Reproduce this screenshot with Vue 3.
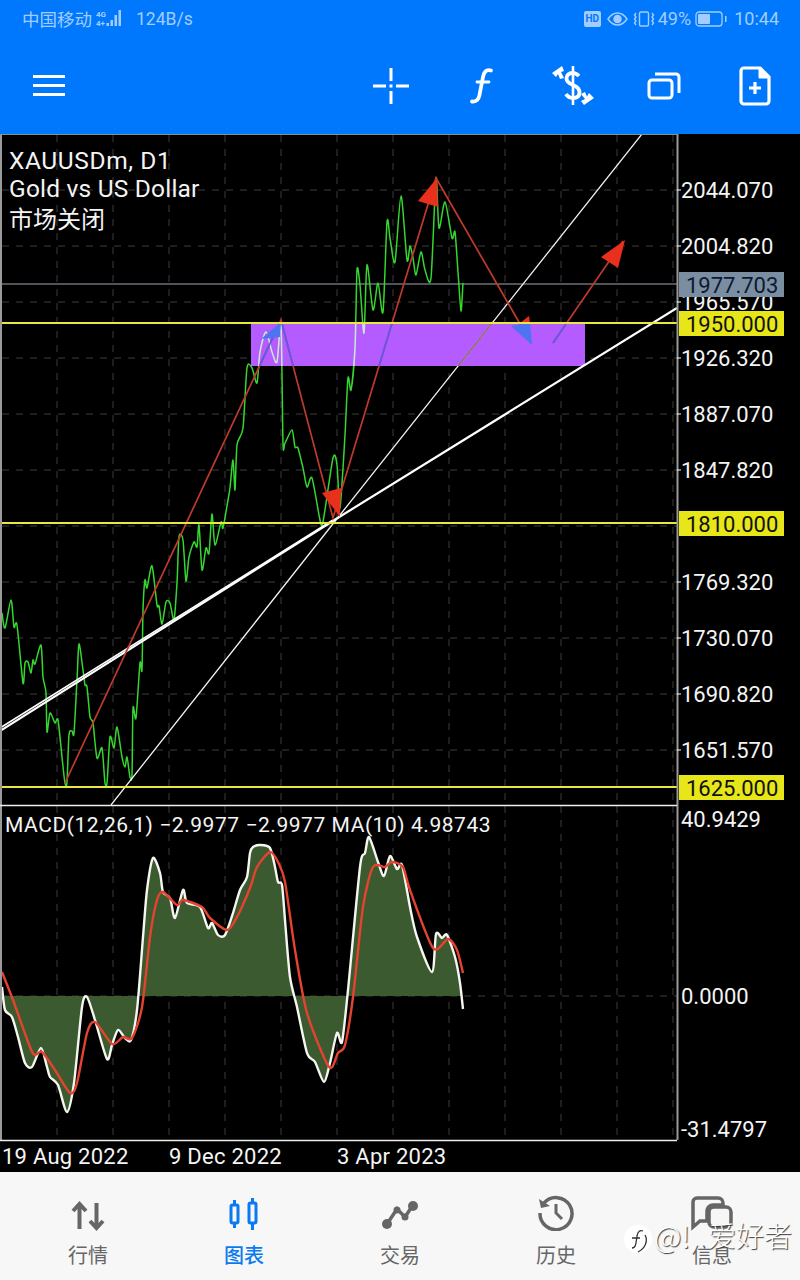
<template>
  <div class="page">
    <header class="top">
      <div class="status">
        <span>中国移动</span>
        <svg class="signal" width="28" height="20" viewBox="0 0 28 20">
          <text x="0" y="8" class="sig-text">4G</text>
          <text x="0" y="17" class="sig-text">4+</text>
          <rect x="10.500" y="14" width="2.500" height="3" />
          <rect x="14.500" y="11" width="2.500" height="6" />
          <rect x="18.500" y="6" width="2.500" height="11" />
          <rect x="22.500" y="1" width="2.500" height="16" />
        </svg>
        <span class="speed">124B/s</span>
        <div class="status-right">
          <span class="hd">HD</span>
          <svg width="21" height="14" viewBox="0 0 21 14" fill="none" stroke="currentColor" stroke-width="1.500">
            <path d="M1 7C4 2.500 7 1 10.500 1S17 2.500 20 7C17 11.500 14 13 10.500 13S4 11.500 1 7Z" />
            <circle cx="10.500" cy="7" r="3.500" fill="currentColor" />
          </svg>
          <svg class="vib" width="22" height="16" viewBox="0 0 22 16" fill="none" stroke="currentColor" stroke-width="1.400">
            <rect x="6.500" y="1" width="9" height="14" rx="1.500" />
            <path d="M3 2L1.500 4L3 6L1.500 8L3 10L1.500 12L3 14M19 2L20.500 4L19 6L20.500 8L19 10L20.500 12L19 14" />
          </svg>
          <span class="pct">49%</span>
          <svg class="bat" width="32" height="16" viewBox="0 0 32 16" fill="none" stroke="currentColor" stroke-width="1.300">
            <rect x="1" y="1" width="26" height="14" rx="3" />
            <rect x="3" y="3" width="12" height="10" rx="1" fill="currentColor" stroke="none" />
            <rect x="30" y="5" width="1.500" height="6" fill="currentColor" stroke="none" />
          </svg>
          <span class="time">10:44</span>
        </div>
      </div>
      <div class="toolbar">
        <svg class="menu" width="32" height="22" viewBox="0 0 32 22" fill="#fff">
          <rect y="0" width="32" height="3" />
          <rect y="9" width="32" height="3" />
          <rect y="18" width="32" height="3" />
        </svg>
        <div class="tools">
          <div class="tool">
            <svg width="38" height="38" viewBox="0 0 38 38" fill="#fff">
              <rect x="17.500" y="1" width="3" height="13" />
              <rect x="17.500" y="24" width="3" height="13" />
              <rect x="1" y="17.500" width="13" height="3" />
              <rect x="24" y="17.500" width="13" height="3" />
              <rect x="17.500" y="17.500" width="3" height="3" />
            </svg>
          </div>
          <div class="tool">
            <svg width="38" height="38" viewBox="0 0 38 38" fill="none" stroke="#fff" stroke-width="3.800" stroke-linecap="round">
              <path d="M28 3.500C23 2 21 5 20 10L16.500 28C15.500 33 13 35 9 34.500" />
              <path d="M14 15H26" stroke-width="2.800" />
            </svg>
          </div>
          <div class="tool">
            <svg width="44" height="40" viewBox="0 0 44 40" fill="none" stroke="#fff" stroke-width="3">
              <path d="M22 0V39" stroke-width="2.600" />
              <path d="M28 10C26 8 24 7 21.500 7C18 7 15.500 9 15.500 12.500C15.500 16 18.500 17.500 22 19C26 20.500 28.500 22.500 28.500 26.500C28.500 30 26 32 22 32C18.500 32 16.500 30.500 15 28" stroke-width="3.800" />
              <path d="M11 0L1 7L5 11L7 8L9 13L13 12L10 6L13 5Z" fill="#fff" stroke="none" />
              <path d="M33 39L43 32L38 27L36 30.500L34 26L30 28L34 33L30 35Z" fill="#fff" stroke="none" />
            </svg>
          </div>
          <div class="tool">
            <svg width="34" height="28" viewBox="0 0 34 28" fill="none" stroke="#fff" stroke-width="3">
              <rect x="2" y="8" width="23" height="18" rx="3" />
              <path d="M8 2H29A3 3 0 0 1 32 5V21" />
            </svg>
          </div>
          <div class="tool">
            <svg width="32" height="40" viewBox="0 0 32 40" fill="none" stroke="#fff" stroke-width="3.200">
              <path d="M5 2H21L30 11V35A3 3 0 0 1 27 38H5A3 3 0 0 1 2 35V5A3 3 0 0 1 5 2Z" stroke-linejoin="round" />
              <path d="M20 2V12H30" fill="#fff" stroke-width="1" />
              <path d="M16 16V28M10 22H22" />
            </svg>
          </div>
        </div>
      </div>
    </header>

    <main class="chart">
      <svg class="chart-svg" width="800" height="1038" viewBox="0 134 800 1038">
        <defs>
          <clipPath id="zone"><rect x="251" y="323" width="334" height="43" /></clipPath>
          <clipPath id="main"><rect x="2" y="135" width="675" height="670" /></clipPath>
        </defs>

        <!-- grid -->
        <g class="grid">
          <path v-for="x in gridX" :key="'a' + x" :d="`M${x} 135V805`" />
          <path v-for="x in gridX" :key="'b' + x" :d="`M${x} 806V1140`" />
          <path v-for="y in gridY" :key="'h' + y" :d="`M2 ${y}H677`" />
          <path d="M2 996H677" />
        </g>

        <!-- zone + levels -->
        <rect x="251" y="323" width="334" height="43" fill="#b45cff" />
        <path class="current" d="M2 284H677" />

        <g clip-path="url(#main)">
          <path :d="greenPath" class="green" />
          <path class="trend-thin" d="M111 805L336 520L642 134" />
          <path class="trend-thick" d="M0 731L336 519L677 308" />
          <path class="trend-double" d="M0 728L333 520" />
          <path class="red" d="M65 783L281 320L333 518L436 178L531 343" />
          <path class="red" d="M553 343L623 241" />

          <!-- xor look inside the zone -->
          <g clip-path="url(#zone)">
            <path :d="greenPath" class="green-over" />
            <path class="trend-over" d="M111 805L336 520L642 134" />
            <path class="red-over" d="M65 783L281 320L333 518L436 178L531 343" />
            <path class="red-over" d="M553 343L623 241" />
          </g>

          <polygon points="437,178 418,201 438,207" fill="#e8301c" />
          <polygon points="340,517 322,493 341,488" fill="#e8301c" />
          <polygon points="625,240 601,257 618,268" fill="#e8301c" />
          <polygon points="520,323 529,316 530,323" fill="#e8301c" />
          <polygon points="281,322 261,339 280,337" fill="#4f74f2" />
          <polygon points="532,345 511,326 530,323" fill="#4f74f2" />
        </g>

        <path class="level" d="M0 323H677M0 523H677M0 787H677" />

        <!-- macd -->
        <path :d="macdFill" fill="#3c5a30" />
        <path :d="macdWhite" class="macd-white" />
        <path :d="macdRed" class="macd-red" />

        <!-- frame -->
        <path class="frame" d="M1 134V1140" />
        <path class="frame" d="M677.500 134V1140" />
        <path class="frame-top" d="M0 134.500H677" />
        <path class="sep" d="M0 805.500H677M0 1140.500H677" />

        <!-- axis -->
        <g class="axis">
          <path v-for="l in priceLabels" :key="'t' + l.t" class="tick" :d="`M677 ${l.y}H681`" />
          <text v-for="l in priceLabels" :key="l.t" x="681" :y="l.y + 8">{{ l.t }}</text>
          <text x="681" y="827">40.9429</text>
          <text x="681" y="1004">0.0000</text>
          <text x="681" y="1137">-31.4797</text>
        </g>

        <g v-for="tag in tags" :key="tag.t">
          <rect x="679" :y="tag.y" width="105" height="25" :fill="tag.bg" />
          <text class="tag-text" x="686" :y="tag.y + 20.500" :fill="tag.fg">{{ tag.t }}</text>
        </g>

        <text class="title first" x="9" y="169">XAUUSDm, D1</text>
        <text class="title" x="9" y="197">Gold vs US Dollar</text>
        <text class="title cjk" x="9" y="228">市场关闭</text>

        <text class="macd-label" x="5" y="832">MACD(12,26,1) −2.9977 −2.9977 MA(10) 4.98743</text>

        <text class="date" x="2" y="1164">19 Aug 2022</text>
        <text class="date" x="169" y="1164">9 Dec 2022</text>
        <text class="date" x="337" y="1164">3 Apr 2023</text>
      </svg>
    </main>

    <nav class="nav">
      <div class="tab">
        <svg width="34" height="30" viewBox="0 0 34 30" fill="none" stroke="currentColor" stroke-width="4">
          <path d="M8.500 28V4M2 10L8.500 3L15 10" />
          <path d="M25.500 2V26M19 20L25.500 27L32 20" />
        </svg>
        <span>行情</span>
      </div>
      <div class="tab active">
        <svg width="32" height="34" viewBox="0 0 32 34" fill="none" stroke="currentColor" stroke-width="3">
          <rect x="3" y="8" width="7" height="18" rx="1.500" />
          <rect x="21" y="6" width="7" height="20" rx="1.500" />
          <path d="M6.500 3V8M6.500 26V31M24.500 1V6M24.500 26V33" />
        </svg>
        <span>图表</span>
      </div>
      <div class="tab">
        <svg width="38" height="32" viewBox="0 0 38 32" fill="currentColor">
          <path d="M6 25L16 10L24 18L32 6" fill="none" stroke="currentColor" stroke-width="3.500" />
          <circle cx="6" cy="25" r="5" />
          <circle cx="16" cy="11" r="3.500" />
          <circle cx="24" cy="18" r="3.500" />
          <circle cx="32" cy="7" r="5" />
        </svg>
        <span>交易</span>
      </div>
      <div class="tab">
        <svg width="36" height="36" viewBox="0 0 36 36" fill="none" stroke="currentColor" stroke-width="3.500">
          <path d="M6 8A16 16 0 1 1 2 18" />
          <path d="M1 4L3 13L12 11Z" fill="currentColor" stroke="none" />
          <path d="M18 9V18L24 24" stroke-width="3" />
        </svg>
        <span>历史</span>
      </div>
      <div class="tab">
        <svg class="chat" width="44" height="40" viewBox="0 0 44 40" fill="none" stroke="currentColor" stroke-width="3.500">
          <path d="M7 2H28A5 5 0 0 1 33 7V9H23A6 6 0 0 0 17 15V25H10L3 31V6A4 4 0 0 1 7 2Z" />
          <rect x="19" y="11" width="22" height="20" rx="5" />
        </svg>
        <span>信息</span>
      </div>
    </nav>

    <!-- watermark on top of the screenshot -->
    <div class="mark">
      <svg class="mark-logo" width="28" height="34" viewBox="0 0 28 34">
        <circle cx="14" cy="15" r="14" fill="#fff" />
        <path d="M8 24C12 24 12 19 13 12C14 7 16 6 19 7M8 14H16M21 11C24 16 22 24 14 28" fill="none" stroke="#333" stroke-width="1.300" />
      </svg>
      <span class="mark-at">@!</span>
      <span class="mark-name">爱好者</span>
    </div>
  </div>
</template>

<script setup>
const gridX = [57, 113, 169, 225, 281, 337, 393, 449, 505, 561, 617, 673]
const gridY = [190, 246, 302, 358, 414, 470, 526, 582, 638, 694, 750]

const priceLabels = [
  { t: '2044.070', y: 190 },
  { t: '2004.820', y: 246 },
  { t: '1965.570', y: 302 },
  { t: '1926.320', y: 358 },
  { t: '1887.070', y: 414 },
  { t: '1847.820', y: 470 },
  { t: '1769.320', y: 582 },
  { t: '1730.070', y: 638 },
  { t: '1690.820', y: 694 },
  { t: '1651.570', y: 750 }
]

const tags = [
  { t: '1977.703', y: 272, bg: '#7b8da1', fg: '#0b1a33' },
  { t: '1950.000', y: 311, bg: '#e6e619', fg: '#111' },
  { t: '1810.000', y: 511, bg: '#e6e619', fg: '#111' },
  { t: '1625.000', y: 775, bg: '#e6e619', fg: '#111' }
]

// catmull-rom -> bezier, the lines in the chart are rounded
function smooth(raw) {
  const p = raw.trim().split(/\s+/).map((s) => s.split(',').map(Number))
  let d = `M${p[0][0]} ${p[0][1]}`
  for (let i = 0; i < p.length - 1; i++) {
    const a = p[i - 1] || p[i]
    const b = p[i]
    const c = p[i + 1]
    const e = p[i + 2] || c
    const k = 0.13
    d += `C${(b[0] + (c[0] - a[0]) * k).toFixed(1)} ${(b[1] + (c[1] - a[1]) * k).toFixed(1)} ${(c[0] - (e[0] - b[0]) * k).toFixed(1)} ${(c[1] - (e[1] - b[1]) * k).toFixed(1)} ${c[0]} ${c[1]}`
  }
  return d
}

const greenLine = `2,613 5,628 11,600 14,627 17,625 23,683 25,663 28,662 31,673 33,660 35,664 41,645 43,677
46,693 47,732 50,713 55,723 58,720 62,757 65,783 67,782 69,735 72,731 74,733 77,680 79,644 83,670 85,685 87,687
90,717 93,723 97,758 102,748 105,783 107,783 110,737 114,748 117,727 122,757 125,767 127,757 130,777 132,775
133,708 136,718 140,663 142,670 143,610 145,580 147,588 152,566 157,605 159,606 162,624 166,602 170,603 174,620
177,583 179,537 183,540 186,581 189,557 194,542 197,547 199,525 202,570 206,548 209,553 212,514 215,545 221,522
223,528 228,500 230,488 233,460 235,490 237,445 243,428 247,368 252,368 257,383 260,352 266,332 272,352 277,362
281,325 283,443 285,443 292,430 295,447 298,448 303,468 307,487 312,478 320,520 323,522 333,458 337,465 340,508
345,435 348,378 351,390 355,348 357,270 360,285 364,333 367,265 373,310 378,283 383,312 387,222 390,238 395,262
401,196 407,260 410,246 413,258 416,275 421,252 425,270 431,278 436,178 439,228 445,202 452,238 455,232 458,272
461,311 463,283`

const whitePts = `2,987 5,1010 12,1017 18,1037 25,1063 32,1067 41,1048 47,1067 50,1077 58,1085 67,1112 74,1083
82,1007 87,997 95,1020 107,1059 112,1045 118,1030 125,1038 131,1040 137,1010 143,937 147,890 153,858 160,873
163,892 170,898 175,918 183,890 187,903 200,907 208,928 212,923 218,935 225,935 233,913 240,890 247,877 250,853
253,847 260,845 270,848 275,867 278,882 282,885 285,920 290,977 297,1007 307,1053 315,1062 324,1082 330,1063
337,1033 342,1042 348,990 360,867 365,853 369,837 378,862 384,876 390,856 397,869 402,865 410,907 417,937
432,972 436,934 442,938 447,935 455,957 460,983 463,1009`

const redPts = `2,972 13,1000 30,1047 35,1055 42,1052 55,1070 70,1093 77,1083 87,1033 95,1022 112,1044 123,1037
132,1038 142,1007 150,937 157,900 163,892 177,905 183,900 202,907 210,918 227,930 237,917 250,888 257,867 270,852
278,862 285,882 295,950 307,1013 329,1067 338,1053 345,1045 353,997 363,907 373,867 385,867 392,862 403,867
410,890 433,948 448,939 457,950 463,973`

const greenPath = smooth(greenLine)
const macdWhite = smooth(whitePts)
const macdRed = smooth(redPts)
const macdFill = `${macdWhite}L463 996L2 996Z`
</script>

<style>
html,
body {
  margin: 0;
  background: #000;
}
</style>

<style scoped>
.page {
  position: relative;
  width: 800px;
  height: 1280px;
  display: flex;
  flex-direction: column;
  overflow: hidden;
  font-family: Roboto, "Noto Sans CJK SC", sans-serif;
}

.top {
  background: #0078fe;
  height: 134px;
  flex: none;
}

.status {
  height: 37px;
  display: flex;
  align-items: center;
  padding: 0 21px 0 22px;
  color: #a3cdff;
  font-size: 17.500px;
}

.signal {
  margin-left: 4px;
  fill: currentColor;
}

.sig-text {
  font-size: 8px;
  font-weight: 700;
}

.speed {
  margin-left: 12px;
  font-size: 17.500px;
}

.status-right {
  margin-left: auto;
  display: flex;
  align-items: center;
}

.hd {
  background: #a3cdff;
  color: #0078fe;
  font-size: 10px;
  font-weight: 700;
  width: 17px;
  height: 16px;
  line-height: 16px;
  text-align: center;
  border-radius: 2px;
  margin-right: 6px;
}

.vib {
  margin-left: 5px;
}

.pct {
  margin-left: 3px;
  font-size: 18px;
}

.bat {
  margin-left: 4px;
}

.time {
  margin-left: 7px;
  font-size: 18px;
}

.toolbar {
  height: 97px;
  display: flex;
  align-items: center;
  padding-left: 33px;
}

.tools {
  margin-left: auto;
  display: flex;
}

.tool {
  width: 91px;
  display: flex;
  justify-content: center;
  align-items: center;
}

.chart {
  flex: 1;
  background: #000;
}

.chart-svg {
  display: block;
}

.grid path {
  stroke: #3d3d3d;
  stroke-width: 1;
  stroke-dasharray: 7 7;
  fill: none;
}

.current {
  stroke: #6a7078;
  stroke-width: 1.500;
}

.level {
  stroke: #e8e840;
  stroke-width: 2;
  fill: none;
}

.green {
  fill: none;
  stroke: #35d62f;
  stroke-width: 1.500;
}

.green-over {
  fill: none;
  stroke: #e6d0ff;
  stroke-width: 1.500;
}

.trend-thin {
  fill: none;
  stroke: #f2f2f2;
  stroke-width: 1.300;
}

.trend-thick {
  fill: none;
  stroke: #fff;
  stroke-width: 2.200;
}

.trend-double {
  fill: none;
  stroke: #fff;
  stroke-width: 1.500;
}

.trend-over {
  fill: none;
  stroke: #8f6a5e;
  stroke-width: 1.500;
}

.red {
  fill: none;
  stroke: #bf3a2c;
  stroke-width: 1.700;
}

.red-over {
  fill: none;
  stroke: #5c5cf0;
  stroke-width: 1.700;
}

.macd-white {
  fill: none;
  stroke: #f6f6f0;
  stroke-width: 2.400;
  stroke-linejoin: round;
}

.macd-red {
  fill: none;
  stroke: #e5432f;
  stroke-width: 2.400;
  stroke-linejoin: round;
}

.frame {
  stroke: #9a9a9a;
  stroke-width: 2;
}

.frame-top {
  stroke: #8a8f96;
  stroke-width: 1;
}

.sep {
  stroke: #eee;
  stroke-width: 1.500;
}

.tick {
  stroke: #fff;
  stroke-width: 1;
}

.axis text,
.tag-text,
.date {
  font-family: Roboto, sans-serif;
  font-size: 22px;
}

.date {
  letter-spacing: 0.25px;
}

.axis text,
.date,
.title,
.macd-label {
  fill: #f4f4f4;
}

.title {
  font-family: Roboto, sans-serif;
  font-size: 24.500px;
  letter-spacing: 0.2px;
}

.title.first {
  letter-spacing: 0.6px;
}

.title.cjk {
  font-family: "Noto Sans CJK SC", sans-serif;
  font-size: 24px;
  letter-spacing: 0;
}

.macd-label {
  font-family: Roboto, sans-serif;
  font-size: 21px;
  letter-spacing: 0.55px;
}

.nav {
  height: 108px;
  flex: none;
  background: #f7f7f7;
  display: grid;
  grid-template-columns: repeat(5, 156px);
  padding: 0 10px;
  box-sizing: border-box;
  font-family: "Noto Sans CJK SC", sans-serif;
}

.tab {
  position: relative;
  color: #666;
  display: flex;
  flex-direction: column;
  align-items: center;
  justify-content: flex-end;
  padding-bottom: 10px;
  font-size: 20px;
  line-height: 30px;
}

.tab svg {
  margin-bottom: 9px;
}

.tab.active {
  color: #0a7af0;
  font-weight: 500;
}

.tab .chat {
  margin-bottom: 4px;
}

.mark {
  position: absolute;
  left: 624px;
  top: 1212px;
  display: flex;
  align-items: center;
  color: #fff;
  text-shadow: 1px 1px 1px #333;
  font-family: "Noto Sans CJK SC", sans-serif;
  font-weight: 300;
}

.mark-logo {
  margin-top: 12px;
}

.mark-at {
  margin-left: 2px;
  font-size: 30px;
  width: 54px;
}

.mark-name {
  font-size: 28px;
}
</style>
